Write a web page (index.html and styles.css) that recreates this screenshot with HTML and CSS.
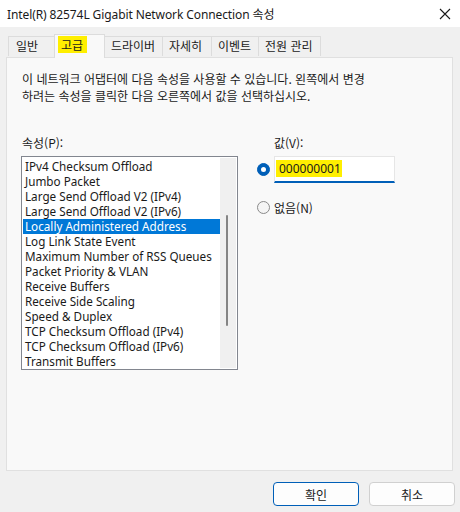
FILE: index.html
```html
<!DOCTYPE html>
<html lang="ko">
<head>
<meta charset="utf-8">
<link rel="stylesheet" href="styles.css">
</head>
<body>
<div class="window">
  <div class="titlebar">
    <span class="title">Intel(R) 82574L Gigabit Network Connection 속성</span>
    <svg class="close" width="12" height="12" viewBox="0 0 12 12"><path d="M1 1 L11 11 M11 1 L1 11" stroke="#1a1a1a" stroke-width="1.1" fill="none"/></svg>
  </div>
  <div class="tabs">
    <div class="tab t1">일반</div>
    <div class="tab active"><span class="hl">고급</span></div>
    <div class="tab t3">드라이버</div>
    <div class="tab t4">자세히</div>
    <div class="tab t5">이벤트</div>
    <div class="tab t6">전원 관리</div>
  </div>
  <div class="panel">
    <p class="desc">이 네트워크 어댑터에 다음 속성을 사용할 수 있습니다. 왼쪽에서 변경<br>하려는 속성을 클릭한 다음 오른쪽에서 값을 선택하십시오.</p>
    <div class="cols">
      <div class="left">
        <div class="label">속성(P):</div>
        <div class="listbox">
          <ul class="items">
            <li>IPv4 Checksum Offload</li>
            <li>Jumbo Packet</li>
            <li>Large Send Offload V2 (IPv4)</li>
            <li>Large Send Offload V2 (IPv6)</li>
            <li class="sel">Locally Administered Address</li>
            <li>Log Link State Event</li>
            <li>Maximum Number of RSS Queues</li>
            <li>Packet Priority &amp; VLAN</li>
            <li>Receive Buffers</li>
            <li>Receive Side Scaling</li>
            <li>Speed &amp; Duplex</li>
            <li>TCP Checksum Offload (IPv4)</li>
            <li>TCP Checksum Offload (IPv6)</li>
            <li>Transmit Buffers</li>
          </ul>
          <div class="scroll"><div class="thumb"></div></div>
        </div>
      </div>
      <div class="right">
        <div class="label vlabel">값(V):</div>
        <div class="row">
          <span class="radio on"></span>
          <div class="input"><span class="hl val">000000001</span></div>
        </div>
        <div class="row row2">
          <span class="radio"></span>
          <span class="rtext">없음(N)</span>
        </div>
      </div>
    </div>
  </div>
  <div class="footer">
    <button class="btn primary">확인</button>
    <button class="btn">취소</button>
  </div>
</div>
</body>
</html>
```

FILE: styles.css
```css
* { box-sizing: border-box; }
html, body { margin: 0; padding: 0; }
body {
  width: 460px;
  height: 512px;
  background: #f0f0f0;
  font-family: "Noto Sans", "Noto Sans CJK KR", sans-serif;
  font-size: 12px;
  color: #1a1a1a;
  overflow: hidden;
}
.window { display: flex; flex-direction: column; height: 512px; }
.titlebar {
  height: 27px;
  background: #ffffff;
  display: flex;
  align-items: center;
  justify-content: space-between;
  padding: 0 9px 0 7px;
}
.title { font-size: 12px; color: #1a1a1a; letter-spacing: -0.1px; }
.close { display: block; }

.tabs {
  display: flex;
  padding-left: 8px;
  margin-top: 8px;
  height: 22px;
  align-items: flex-end;
  position: relative;
  z-index: 1;
}
.tab {
  height: 20px;
  margin-bottom: 1px;
  border: 1px solid #dcdcdc;
  border-bottom: none;
  border-left: none;
  background: #f0f0f0;
  font-family: "Noto Sans CJK KR", sans-serif;
  font-size: 12px;
  line-height: 18px;
  padding: 0 0 0 6px;
  white-space: nowrap;
  color: #1a1a1a;
  flex: none;
}
.t1 { border-left: 1px solid #dcdcdc; width: 47px; padding-left: 7px; }
.t3 { width: 58px; }
.t4 { width: 49px; }
.t5 { width: 47px; }
.t6 { width: 62px; }
.tab.active {
  height: 24px;
  margin-bottom: -1px;
  background: #f9f9f9;
  width: 51px;
  padding: 1px 0 0 3px;
  border-left: 1px solid #dcdcdc;
  margin-left: -1px;
}
.hl { background: #ffef00; }
.tab.active .hl { display: inline-block; padding: 0 4px 0 3px; line-height: 18px; height: 17px; }

.panel {
  margin: 0 7px 0 6px;
  height: 414px;
  background: #f9f9f9;
  border: 1px solid #e0e0e0;
  padding: 12px 15px 0 14px;
}
.desc {
  margin: 0;
  padding-left: 1px;
  font-family: "Noto Sans CJK KR", sans-serif;
  font-size: 12px;
  line-height: 17px;
  color: #1a1a1a;
}
.cols { display: flex; margin-top: 31px; }
.left { width: 234px; }
.label {
  font-family: "Noto Sans CJK KR", sans-serif;
  font-size: 12px;
  line-height: 16px;
  height: 16px;
  margin-bottom: 5px;
  padding-left: 1px;
}
.listbox {
  width: 217px;
  height: 214px;
  border: 1px solid #82868f;
  background: #ffffff;
  display: flex;
  padding: 1px;
}
.items {
  list-style: none;
  margin: 0;
  padding: 1px 0 0 0;
  flex: 1;
  font-family: "Noto Sans", sans-serif;
  font-size: 11.7px;
}
.items li {
  height: 15px;
  line-height: 15px;
  padding-left: 2px;
  white-space: nowrap;
  color: #1a1a1a;
}
.items li.sel { background: #0078d7; color: #ffffff; }
.scroll {
  width: 16px;
  background: #f0f0f0;
  position: relative;
}
.thumb {
  position: absolute;
  left: 6px;
  top: 57px;
  width: 2px;
  height: 111px;
  background: #858585;
  border-radius: 1px;
}

.right { flex: 1; padding-left: 2px; }
.vlabel { padding-left: 17px; }
.row { display: flex; align-items: center; }
.radio {
  width: 13px;
  height: 13px;
  border-radius: 50%;
  border: 1px solid #8a8a8a;
  background: #f5f5f5;
  flex: none;
  margin-right: 4px;
}
.radio.on {
  background: #005fb8;
  border-color: #005fb8;
  position: relative;
}
.radio.on::after {
  content: "";
  position: absolute;
  left: 3px;
  top: 3px;
  width: 5px;
  height: 5px;
  border-radius: 50%;
  background: #ffffff;
}
.input {
  width: 121px;
  height: 27px;
  background: #ffffff;
  border: 1px solid #e6e6e6;
  border-bottom: 2px solid #005fb8;
  padding: 3px 0 0 1px;
}
.val {
  display: inline-block;
  font-family: "Noto Sans", sans-serif;
  font-size: 12px;
  line-height: 17px;
  color: #1a1a1a;
  padding: 0 1px 0 3px;
}
.row2 { margin-top: 16px; }
.rtext { font-family: "Noto Sans CJK KR", sans-serif; font-size: 12px; }

.footer {
  display: flex;
  justify-content: flex-end;
  gap: 10px;
  padding: 11px 5px 0 0;
}
.btn {
  width: 86px;
  height: 24px;
  border: 1px solid #d0d0d0;
  border-radius: 4px;
  background: #fdfdfd;
  font-family: "Noto Sans CJK KR", sans-serif;
  font-size: 12px;
  color: #1a1a1a;
  padding: 0;
}
.btn.primary { border: 1px solid #005fb8; }
```
